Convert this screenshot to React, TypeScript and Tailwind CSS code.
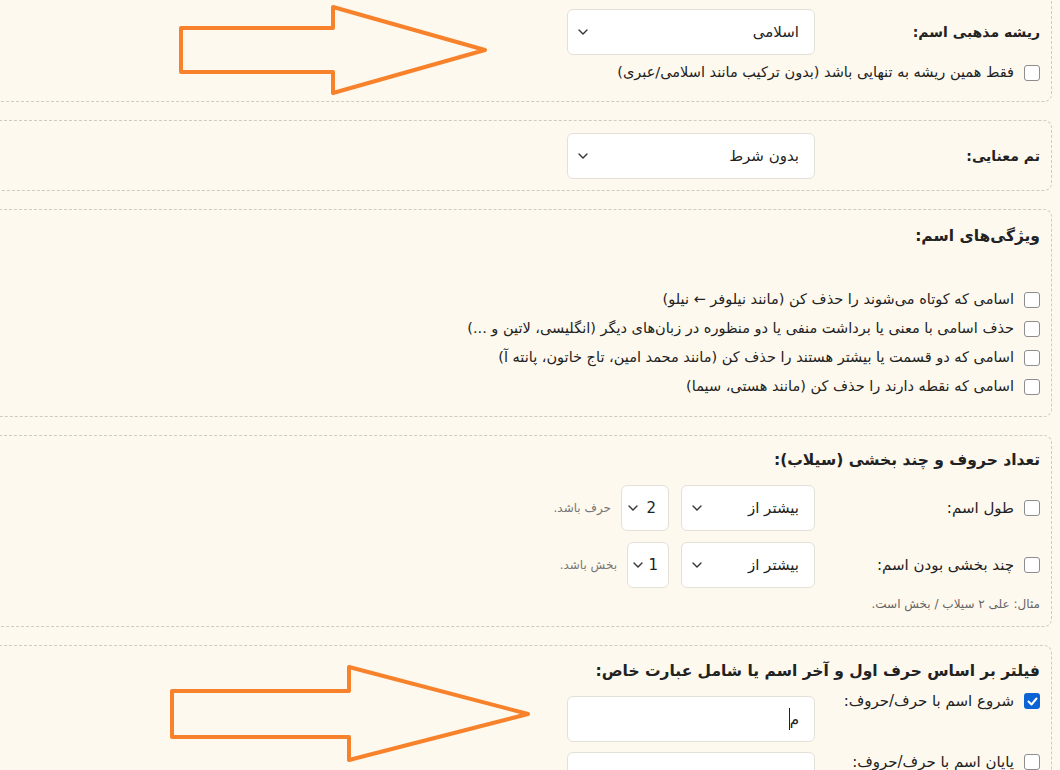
import React from "react";

const font = { fontFamily: '"DejaVu Sans", "Noto Sans", sans-serif' };

function Chevron() {
  return (
    <svg width="10" height="6" viewBox="0 0 10 6" className="shrink-0">
      <path d="M1 1l4 4 4-4" fill="none" stroke="#333" strokeWidth="1.4" strokeLinecap="round" strokeLinejoin="round" />
    </svg>
  );
}

function Select({ value, className }: { value: string; className: string }) {
  return (
    <div className={`flex h-[46px] items-center justify-between rounded-md border border-[#e3e0d8] bg-white ${className}`}>
      <span className="text-[15px] text-[#222]">{value}</span>
      <Chevron />
    </div>
  );
}

function Box({ checked = false }: { checked?: boolean }) {
  if (checked)
    return (
      <span className="flex h-4 w-4 shrink-0 items-center justify-center rounded-[3px] bg-[#0b63d6]">
        <svg width="11" height="9" viewBox="0 0 11 9">
          <path d="M1.5 4.5l3 3 5-6" fill="none" stroke="#fff" strokeWidth="2" strokeLinecap="round" strokeLinejoin="round" />
        </svg>
      </span>
    );
  return <span className="h-4 w-4 shrink-0 rounded-[3px] border border-[#8d8d8d] bg-white" />;
}

function Check({ text }: { text: string }) {
  return (
    <div className="flex h-[29px] items-center gap-[10px]">
      <Box />
      <span className="text-[14.5px] text-[#222]">{text}</span>
    </div>
  );
}

export default function App() {
  return (
    <div dir="rtl" style={font} className="relative h-[770px] w-[1060px] overflow-hidden bg-[#fef9ee] text-[#222]">
      <div className="-ml-6 -mt-5 mr-2 flex flex-col gap-[18px]">
        {/* religious root */}
        <div className="rounded-lg border border-dashed border-[#cfcbc2] pb-[18px] pl-3 pr-[11px] pt-[28px]">
          <div className="flex items-center gap-[15px]">
            <div className="w-[210px] text-[14px] font-bold">ریشه مذهبی اسم:</div>
            <Select value="اسلامی" className="w-[248px] pl-[10px] pr-[15px]" />
          </div>
          <div className="mt-2 flex h-5 items-center gap-[10px]">
            <Box />
            <span className="text-[14.5px]">فقط همین ریشه به تنهایی باشد (بدون ترکیب مانند اسلامی/عبری)</span>
          </div>
        </div>

        {/* theme */}
        <div className="rounded-lg border border-dashed border-[#cfcbc2] pb-[11px] pl-3 pr-[11px] pt-3">
          <div className="flex items-center gap-[15px]">
            <div className="w-[210px] text-[14px] font-bold">تم معنایی:</div>
            <Select value="بدون شرط" className="w-[248px] pl-[10px] pr-[15px]" />
          </div>
        </div>

        {/* features */}
        <div className="rounded-lg border border-dashed border-[#cfcbc2] pb-[15px] pl-3 pr-[11px] pt-[13px]">
          <div className="h-[26px] text-[15.5px] font-bold leading-[26px]">ویژگی‌های اسم:</div>
          <div className="mt-9 flex flex-col">
            <Check text="اسامی که کوتاه می‌شوند را حذف کن (مانند نیلوفر ← نیلو)" />
            <Check text="حذف اسامی با معنی یا برداشت منفی یا دو منظوره در زبان‌های دیگر (انگلیسی، لاتین و ...)" />
            <Check text="اسامی که دو قسمت یا بیشتر هستند را حذف کن (مانند محمد امین، تاج خاتون، پانته آ)" />
            <Check text="اسامی که نقطه دارند را حذف کن (مانند هستی، سیما)" />
          </div>
        </div>

        {/* length & syllables */}
        <div className="rounded-lg border border-dashed border-[#cfcbc2] pb-[13px] pl-3 pr-[11px] pt-[11px]">
          <div className="h-[26px] text-[15.5px] font-bold leading-[26px]">تعداد حروف و چند بخشی (سیلاب):</div>
          <div className="mt-3 flex items-center gap-[15px]">
            <div className="flex w-[210px] items-center gap-[10px]">
              <Box />
              <span className="text-[15px]">طول اسم:</span>
            </div>
            <Select value="بیشتر از" className="w-[134px] pl-[10px] pr-[15px]" />
            <Select value="2" className="-mr-[3px] w-[48px] pl-[6px] pr-[12px]" />
            <span className="-mr-[5px] text-[12px] text-[#777]">حرف باشد.</span>
          </div>
          <div className="mt-[11px] flex items-center gap-[15px]">
            <div className="flex w-[210px] items-center gap-[10px]">
              <Box />
              <span className="text-[15px]">چند بخشی بودن اسم:</span>
            </div>
            <Select value="بیشتر از" className="w-[134px] pl-[10px] pr-[15px]" />
            <Select value="1" className="-mr-[3px] w-[42px] pl-[5px] pr-[10px]" />
            <span className="-mr-[5px] text-[12px] text-[#777]">بخش باشد.</span>
          </div>
          <div className="mt-[7px] h-[18px] text-[12px] leading-[18px] text-[#666]">مثال: علی ۲ سیلاب / بخش است.</div>
        </div>

        {/* letter filter */}
        <div className="rounded-lg border border-dashed border-[#cfcbc2] pb-4 pl-3 pr-[11px] pt-3">
          <div className="h-[26px] text-[15.5px] font-bold leading-[26px]">فیلتر بر اساس حرف اول و آخر اسم یا شامل عبارت خاص:</div>
          <div className="mt-[7px] flex items-start gap-[15px]">
            <div className="flex h-5 w-[210px] items-center gap-[10px]">
              <Box checked />
              <span className="text-[15px]">شروع اسم با حرف/حروف:</span>
            </div>
            <div className="mt-[5px] flex h-[46px] w-[248px] items-center rounded-md border border-[#e3e0d8] bg-white pr-[15px]">
              <span className="text-[15px]">م</span>
              <span className="h-[22px] w-px bg-[#222]" />
            </div>
          </div>
          <div className="mt-[10px] flex items-start gap-[15px]">
            <div className="flex h-5 w-[210px] items-center gap-[10px]">
              <Box />
              <span className="text-[15px]">پایان اسم با حرف/حروف:</span>
            </div>
            <div className="h-[46px] w-[248px] rounded-md border border-[#e3e0d8] bg-white" />
          </div>
        </div>
      </div>

      <svg className="pointer-events-none absolute left-0 top-0" width="1060" height="770" viewBox="0 0 1060 770">
        <polygon points="181,28 333,28 333,7 485,50 333,93 333,72 181,72" fill="none" stroke="#f7822b" strokeWidth="4" strokeLinejoin="round" />
        <polygon points="172,691 349,691 349,667 528,714 349,760 349,737 172,737" fill="none" stroke="#f7822b" strokeWidth="4" strokeLinejoin="round" />
      </svg>
    </div>
  );
}
